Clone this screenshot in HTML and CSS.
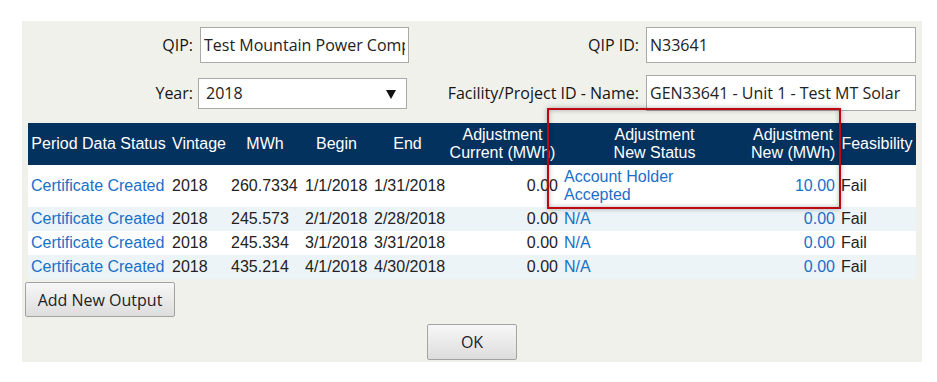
FILE: index.html
```html
<!DOCTYPE html>
<html>
<head>
	<meta name="viewport" content="width=device-width, initial-scale=1">
	<link rel="stylesheet" href="styles.css">
</head>
<body>
	<div class="panel">
		<div class="form-grid">
			<label class="label">QIP:</label>
			<input class="field" type="text" value="Test Mountain Power Company">
			<label class="label">QIP ID:</label>
			<input class="field" type="text" value="N33641">

			<label class="label">Year:</label>
			<div class="select-wrap">
				<select class="select">
					<option>2018</option>
				</select>
			</div>
			<label class="label">Facility/Project ID - Name:</label>
			<input class="field" type="text" value="GEN33641 - Unit 1 - Test MT Solar">
		</div>

		<table class="output-table">
			<colgroup>
				<col style="width: 141px">
				<col style="width: 59px">
				<col style="width: 74px">
				<col style="width: 69px">
				<col style="width: 73px">
				<col style="width: 117px">
				<col style="width: 187px">
				<col style="width: 90px">
				<col style="width: 78px">
			</colgroup>
			<thead>
				<tr>
					<th>Period Data Status</th>
					<th>Vintage</th>
					<th>MWh</th>
					<th>Begin</th>
					<th>End</th>
					<th>Adjustment<br>Current (MWh)</th>
					<th>Adjustment<br>New Status</th>
					<th>Adjustment<br>New (MWh)</th>
					<th>Feasibility</th>
				</tr>
			</thead>
			<tbody>
				<tr>
					<td><a href="#">Certificate Created</a></td>
					<td>2018</td>
					<td>260.7334</td>
					<td>1/1/2018</td>
					<td>1/31/2018</td>
					<td class="num">0.00</td>
					<td><a href="#">Account Holder<br>Accepted</a></td>
					<td class="num link">10.00</td>
					<td>Fail</td>
				</tr>
				<tr>
					<td><a href="#">Certificate Created</a></td>
					<td>2018</td>
					<td>245.573</td>
					<td>2/1/2018</td>
					<td>2/28/2018</td>
					<td class="num">0.00</td>
					<td><a href="#">N/A</a></td>
					<td class="num link">0.00</td>
					<td>Fail</td>
				</tr>
				<tr>
					<td><a href="#">Certificate Created</a></td>
					<td>2018</td>
					<td>245.334</td>
					<td>3/1/2018</td>
					<td>3/31/2018</td>
					<td class="num">0.00</td>
					<td><a href="#">N/A</a></td>
					<td class="num link">0.00</td>
					<td>Fail</td>
				</tr>
				<tr>
					<td><a href="#">Certificate Created</a></td>
					<td>2018</td>
					<td>435.214</td>
					<td>4/1/2018</td>
					<td>4/30/2018</td>
					<td class="num">0.00</td>
					<td><a href="#">N/A</a></td>
					<td class="num link">0.00</td>
					<td>Fail</td>
				</tr>
			</tbody>
		</table>

		<div class="actions">
			<button class="btn btn-add">Add New Output</button>
			<button class="btn btn-ok">OK</button>
		</div>

		<!-- annotation around the new adjustment columns -->
		<div class="highlight"></div>
	</div>
</body>
</html>
```

FILE: styles.css
```css
body {
	margin: 0;
	background-color: #fff;
	font-family: "Open Sans", "Liberation Sans", sans-serif;
	color: #222;
}

.panel {
	position: relative;
	width: 894px;
	margin: 21px 0 0 22px;
	padding: 6px 3px 2px 3px;
	background-color: #f1f1ec;
}

.form-grid {
	display: grid;
	grid-template-columns: 165px 209px 223px 270px;
	grid-template-rows: 36px 36px;
	column-gap: 7px;
	row-gap: 12px;
	align-items: center;
	margin: 0 3px;
}

.label {
	text-align: right;
	font-size: 16px;
	color: #151515;
	white-space: nowrap;
}

.field {
	box-sizing: border-box;
	width: 100%;
	height: 36px;
	padding: 0 3px;
	border: 1px solid #a9a9a9;
	background-color: #fff;
	font-family: "Open Sans", sans-serif;
	font-size: 16px;
	color: #222;
	outline: none;
}

.select-wrap {
	position: relative;
	height: 31px;
	margin-left: -2px;
	margin-right: 2px;
}

.select-wrap::after {
	content: "";
	position: absolute;
	right: 11px;
	top: 12px;
	border-left: 5px solid transparent;
	border-right: 5px solid transparent;
	border-top: 9px solid #111;
	pointer-events: none;
}

.select {
	box-sizing: border-box;
	width: 100%;
	height: 31px;
	padding: 0 7px;
	border: 1px solid #a9a9a9;
	border-radius: 0;
	background-color: #fff;
	font-family: "Open Sans", sans-serif;
	font-size: 16px;
	color: #222;
	-webkit-appearance: none;
	appearance: none;
	outline: none;
}

.output-table {
	width: 888px;
	margin: 12px 3px 0 3px;
	border-collapse: collapse;
	table-layout: fixed;
	font-family: "Liberation Sans", Arial, sans-serif;
	font-size: 16px;
	line-height: 18px;
}

.output-table th {
	padding: 3px;
	background-color: #03325f;
	color: #fff;
	font-weight: normal;
	text-align: center;
	vertical-align: middle;
	white-space: nowrap;
}

.output-table td {
	padding: 3px;
	color: #222;
	text-align: left;
	vertical-align: middle;
	white-space: nowrap;
}

.output-table tbody tr:nth-child(odd) {
	background-color: #fff;
}

.output-table tbody tr:nth-child(even) {
	background-color: #edf4f8;
}

.output-table a {
	color: #1a6fc7;
	text-decoration: none;
}

.output-table .num {
	text-align: right;
}

.output-table .link {
	color: #1a6fc7;
}

.actions {
	display: flex;
	flex-direction: column;
	align-items: center;
	padding-top: 3px;
}

.btn {
	box-sizing: border-box;
	border: 1px solid #a3a3a3;
	border-radius: 2px;
	background: linear-gradient(#f7f7f7, #dddddd);
	font-family: "Open Sans", sans-serif;
	font-size: 16px;
	color: #222;
	cursor: pointer;
}

.btn-add {
	align-self: flex-start;
	width: 150px;
	height: 35px;
}

.btn-ok {
	width: 90px;
	height: 36px;
	margin-top: 7px;
}

.highlight {
	position: absolute;
	left: 525px;
	top: 87px;
	width: 290px;
	height: 97px;
	border: 2px solid #bd0814;
	box-shadow: 0 0 5px rgba(0, 0, 0, 0.3), inset 0 0 5px rgba(0, 0, 0, 0.3);
	pointer-events: none;
}
```
